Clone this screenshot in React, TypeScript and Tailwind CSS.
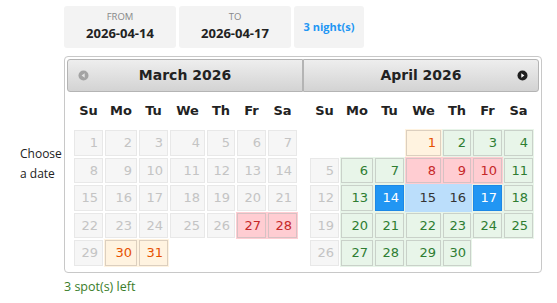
import React from 'react'

type CellState = 'dis' | 'red' | 'orange' | 'green' | 'sel' | 'range' | 'empty'

interface DayCell {
  day?: number
  state: CellState
}

const COLS = 'grid grid-cols-[31px_34px_31px_37px_30px_31px_31px]'
const DAY_NAMES = ['Su', 'Mo', 'Tu', 'We', 'Th', 'Fr', 'Sa']

const tdStyles: Record<CellState, string> = {
  dis: '',
  red: 'bg-[#ffcdd2]',
  orange: 'bg-[#fff3e0]',
  green: 'bg-[#e8f5e9]',
  sel: 'bg-[#e8f5e9]',
  range: 'bg-[#bbdefb]',
  empty: '',
}

const innerStyles: Record<CellState, string> = {
  dis: 'bg-[#f6f6f6] border-[#e8e8e8] text-[#c4c4c4]',
  red: 'bg-[#ffcdd2] border-[#d6c2c4] text-[#c62828]',
  orange: 'bg-[#fff3e0] border-[#dccfbf] text-[#e65100]',
  green: 'bg-[#e8f5e9] border-[#c9d1c9] text-[#2e7d32]',
  sel: 'bg-[#2196f3] border-[#1e88e5] text-white',
  range: 'bg-[#bbdefb] border-[#bbdefb] text-[#333333]',
  empty: '',
}

// March 2026: 1-26 and 29 unavailable, 27-28 full, 30-31 few left
const marchState = (d: number): CellState => {
  if (d === 27 || d === 28) return 'red'
  if (d === 30 || d === 31) return 'orange'
  return 'dis'
}

const aprilState = (d: number): CellState => {
  if (d === 1) return 'orange'
  if ([5, 12, 19, 26].includes(d)) return 'dis'
  if ([8, 9, 10].includes(d)) return 'red'
  if (d === 14 || d === 17) return 'sel'
  if (d === 15 || d === 16) return 'range'
  return 'green'
}

const buildMonth = (offset: number, days: number, stateOf: (d: number) => CellState): DayCell[] => {
  const cells: DayCell[] = []
  for (let i = 0; i < offset; i++) cells.push({ state: 'empty' })
  for (let d = 1; d <= days; d++) cells.push({ day: d, state: stateOf(d) })
  while (cells.length % 7 !== 0) cells.push({ state: 'empty' })
  return cells
}

const PrevIcon = () => (
  <svg width="11" height="11" viewBox="0 0 11 11">
    <circle cx="5.5" cy="5.5" r="5" fill="#a3a3a3" />
    <path d="M6.7 3.2 L3.6 5.5 L6.7 7.8 Z" fill="#e4e4e4" />
  </svg>
)

const NextIcon = () => (
  <svg width="11" height="11" viewBox="0 0 11 11">
    <circle cx="5.5" cy="5.5" r="5" fill="#1f1f1f" />
    <path d="M4.3 3.2 L7.4 5.5 L4.3 7.8 Z" fill="#ffffff" />
  </svg>
)

const MonthPanel: React.FC<{
  title: string
  cells: DayCell[]
  side: 'left' | 'right'
}> = ({ title, cells, side }) => (
  <div className="w-[236px] flex flex-col">
    <div
      className={`relative h-[33px] flex items-center justify-center border border-[#b4b4b4] bg-gradient-to-b from-[#eeeeee] to-[#d3d3d3] ${
        side === 'left' ? 'rounded-l-[3px]' : 'rounded-r-[3px]'
      }`}
    >
      {side === 'left' && (
        <span className="absolute left-[10px] top-[10px] flex">
          <PrevIcon />
        </span>
      )}
      <span className="text-[14px] font-bold text-[#222222]">{title}</span>
      {side === 'right' && (
        <span className="absolute right-[10px] top-[10px] flex">
          <NextIcon />
        </span>
      )}
    </div>
    <div className="pl-[6px]">
      <div className={`${COLS} h-[37px] items-center`}>
        {DAY_NAMES.map((n) => (
          <span key={n} className="text-center text-[13px] font-bold text-[#222222]">
            {n}
          </span>
        ))}
      </div>
      <div className={COLS}>
        {cells.map((c, i) => (
          <div key={i} className={`p-[1px] ${tdStyles[c.state]}`}>
            {c.day ? (
              <div
                className={`h-[25.5px] border flex items-center justify-end pr-[4px] text-[13px] ${innerStyles[c.state]}`}
              >
                {c.day}
              </div>
            ) : (
              <div className="h-[25.5px]" />
            )}
          </div>
        ))}
      </div>
    </div>
  </div>
)

export default function App() {
  const march = buildMonth(0, 31, marchState)
  const april = buildMonth(3, 30, aprilState)

  return (
    <div className="w-[557px] h-[303px] bg-white pt-[6px] font-['Open_Sans',sans-serif] text-[#222222]">
      {/* Selected range summary */}
      <div className="flex gap-[3px] pl-[64px]">
        <div className="w-[112px] h-[42px] bg-[#f3f3f3] rounded-[3px] flex flex-col items-center justify-center">
          <span className="text-[9.5px] leading-[12px] text-[#888888] uppercase">From</span>
          <span className="text-[13px] leading-[20px] font-bold text-[#222222]">2026-04-14</span>
        </div>
        <div className="w-[112px] h-[42px] bg-[#f3f3f3] rounded-[3px] flex flex-col items-center justify-center">
          <span className="text-[9.5px] leading-[12px] text-[#888888] uppercase">To</span>
          <span className="text-[13px] leading-[20px] font-bold text-[#222222]">2026-04-17</span>
        </div>
        <div className="w-[70px] h-[42px] bg-[#f3f3f3] rounded-[3px] flex items-center justify-center">
          <span className="text-[11px] font-bold text-[#2196f3]">3 night(s)</span>
        </div>
      </div>

      {/* Date picker row */}
      <div className="flex items-center mt-[8px]">
        <div className="w-[64px] pl-[20px]">
          <div className="w-[44px] text-[12px] leading-[20px] text-[#222222]">Choose a date</div>
        </div>
        <div className="w-[478px] border border-[#c8c8c8] rounded-[4px] bg-white pt-[2px] px-[2px] pb-[5px] flex font-['DejaVu_Sans',sans-serif]">
          <MonthPanel title="March 2026" cells={march} side="left" />
          <MonthPanel title="April 2026" cells={april} side="right" />
        </div>
      </div>

      <div className="pl-[64px] mt-[5px] text-[12.5px] leading-[18px] text-[#3a7d2a]">3 spot(s) left</div>
    </div>
  )
}
